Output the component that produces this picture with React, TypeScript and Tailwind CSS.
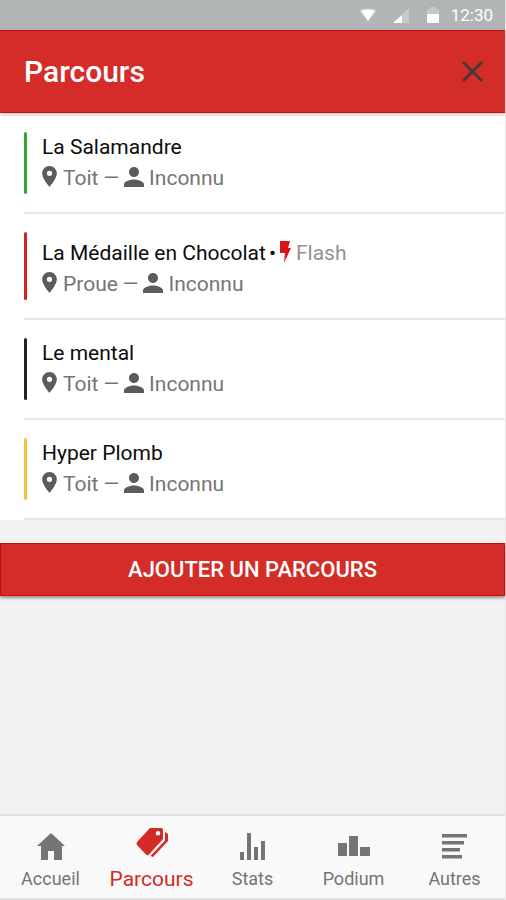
import type { ReactNode } from "react";

type Route = {
  name: string;
  place: string;
  author: string;
  bar: string;
  flash?: boolean;
};

const routes: Route[] = [
  { name: "La Salamandre", place: "Toit", author: "Inconnu", bar: "bg-[#2eab36]" },
  { name: "La Médaille en Chocolat", place: "Proue", author: "Inconnu", bar: "bg-[#cf2525]", flash: true },
  { name: "Le mental", place: "Toit", author: "Inconnu", bar: "bg-[#222222]" },
  { name: "Hyper Plomb", place: "Toit", author: "Inconnu", bar: "bg-[#f5c03c]" },
];

function StatusBar() {
  return (
    <div className="flex h-[30px] items-center justify-end bg-[#b2b5b6] pr-3 text-white">
      <svg className="mr-[16px] h-[14px] w-[18px]" viewBox="0 0 18 14" fill="currentColor" aria-hidden="true">
        <path d="M0 2C5 0 13 0 18 2L9 13Z" opacity=".3" />
        <path d="M2 3C6 1 12 1 16 3L9 13Z" />
      </svg>
      <svg className="mr-[18px] h-[15px] w-[16px]" viewBox="0 0 16 15" fill="currentColor" aria-hidden="true">
        <path d="M0 15L16 0V15Z" opacity=".3" />
        <path d="M0 15L9 7V15Z" />
      </svg>
      <svg className="mr-[12px] h-[16px] w-[12px]" viewBox="0 0 12 16" fill="currentColor" aria-hidden="true">
        <path d="M0 2H3V0H9V2H12V7H0Z" opacity=".25" />
        <path d="M0 7H12V15Q12 16 11 16H1Q0 16 0 15Z" />
      </svg>
      <span className="text-[17px] leading-[30px]">12:30</span>
    </div>
  );
}

function PinIcon() {
  return (
    <svg className="mr-[6px] mb-1 h-[21px] w-[15px]" viewBox="5 2 14 20" fill="#5c5c5c" aria-hidden="true">
      <path d="M12 2C8.13 2 5 5.13 5 9c0 5.25 7 13 7 13s7-7.75 7-13c0-3.87-3.13-7-7-7zm0 9.5a2.5 2.5 0 0 1 0-5 2.5 2.5 0 0 1 0 5z" />
    </svg>
  );
}

function PersonIcon() {
  return (
    <svg className="mr-[5px] mb-1 h-[20px] w-[20px]" viewBox="4 4 16 16" fill="#5c5c5c" aria-hidden="true">
      <path d="M12 12c2.21 0 4-1.79 4-4s-1.79-4-4-4-4 1.79-4 4 1.79 4 4 4zm0 2c-2.67 0-8 1.34-8 4v2h16v-2c0-2.66-5.33-4-8-4z" />
    </svg>
  );
}

function FlashIcon() {
  return (
    <svg className="mr-[5px] mb-1 h-[22px] w-[11px]" viewBox="0 0 11 22" fill="#d8151a" aria-hidden="true">
      <path d="M0 0H10L8 7H11L4 22L5 12H0Z" />
    </svg>
  );
}

function RouteRow({ route }: { route: Route }) {
  return (
    <li className="flex border-b-2 border-[#e6e6e6] py-[18px]">
      <span className={`w-[3px] rounded-sm ${route.bar}`} />
      <div className="ml-[15px] text-[21px] leading-[31px] text-[#757575]">
        <div className="flex items-end">
          <span className="text-[#0c0c0c]">{route.name}</span>
          {route.flash && (
            <span className="flex h-[37px] items-end">
              <span className="mr-1 ml-[3px] text-[#0c0c0c]">•</span>
              <span className="flex items-center">
                <FlashIcon />
                <span className="text-[#929292]">Flash</span>
              </span>
            </span>
          )}
        </div>
        <div className="flex items-center">
          <PinIcon />
          <span>{route.place}</span>
          <span className="mx-[5px] text-[20px]">—</span>
          <PersonIcon />
          <span>{route.author}</span>
        </div>
      </div>
    </li>
  );
}

function Tab({ label, active, children }: { label: string; active?: boolean; children: ReactNode }) {
  return (
    <a
      href="#"
      aria-current={active ? "page" : undefined}
      className={`flex flex-1 flex-col items-center pt-[12px] ${active ? "text-[21px] text-[#d42a27]" : "text-[18px] text-[#747474]"}`}
    >
      <span className="flex h-[36px] items-center">{children}</span>
      <span className="leading-[30px]">{label}</span>
    </a>
  );
}

export default function App() {
  return (
    <div className="flex min-h-screen flex-col border-r border-[#e8e8e8] bg-[#f2f2f2] font-[Roboto,sans-serif]">
      <StatusBar />
      <header className="relative flex h-[83px] items-center justify-between border-y border-[#c90c0c] bg-[#d42c28] pr-[22px] pl-6 shadow-[0_2px_3px_rgba(0,0,0,0.2)]">
        <h1 className="text-[30px] font-medium text-white">Parcours</h1>
        <button type="button" aria-label="Fermer">
          <svg className="h-[21px] w-[21px]" viewBox="0 0 21 21" stroke="#3b3b3b" strokeWidth="2.6" aria-hidden="true">
            <path d="M1 1L20 20M20 1L1 20" />
          </svg>
        </button>
      </header>
      <main className="flex-1">
        <ul className="bg-white pt-px pl-6">
          {routes.map((route) => (
            <RouteRow key={route.name} route={route} />
          ))}
        </ul>
        <button
          type="button"
          className="mt-[23px] h-[53px] w-full border border-[#c90c0c] bg-[#d42c28] text-[22px] font-medium text-white shadow-[0_2px_3px_rgba(0,0,0,0.4)]"
        >
          AJOUTER UN PARCOURS
        </button>
      </main>
      <nav className="flex h-[86px] border-t-2 border-b-2 border-[#e0e0e0] bg-[#f9f9f9]">
        <Tab label="Accueil">
          <svg className="h-[27px] w-[28px]" viewBox="0 0 28 27" fill="currentColor" aria-hidden="true">
            <path d="M14 0L28 13H25V27H17V18H11V27H4V13H0Z" />
          </svg>
        </Tab>
        <Tab label="Parcours" active>
          <svg className="mb-[7px] h-[29px] w-[32px]" viewBox="0 0 32 29" fill="currentColor" aria-hidden="true">
            <path fillRule="evenodd" d="M14 0H25Q27 0 27 2V11L13 26.5Q11.5 28 10 26.5L1 17Q0 15.5 1 14ZM22 3A2.3 2.3 0 1 0 22 7.6A2.3 2.3 0 1 0 22 3Z" />
            <path d="M29 4L32 6V13L17 29L14.5 28L29 12.5Z" />
          </svg>
        </Tab>
        <Tab label="Stats">
          <svg className="h-[27px] w-[25px]" viewBox="0 0 25 27" fill="currentColor" aria-hidden="true">
            <path d="M0 19H4V27H0ZM7 0H11V27H7ZM14 14H18V27H14ZM21 8H25V27H21Z" />
          </svg>
        </Tab>
        <Tab label="Podium">
          <svg className="h-[20px] w-[32px]" viewBox="0 0 32 20" fill="currentColor" aria-hidden="true">
            <path d="M0 7H9V20H0ZM11 0H20V20H11ZM22 11H32V20H22Z" />
          </svg>
        </Tab>
        <Tab label="Autres">
          <svg className="h-[25px] w-[25px]" viewBox="0 0 25 25" fill="currentColor" aria-hidden="true">
            <path d="M0 0H25V3.5H0ZM0 7H22V10.5H0ZM0 14H18V17.5H0ZM0 21H20V24.5H0Z" />
          </svg>
        </Tab>
      </nav>
    </div>
  );
}
